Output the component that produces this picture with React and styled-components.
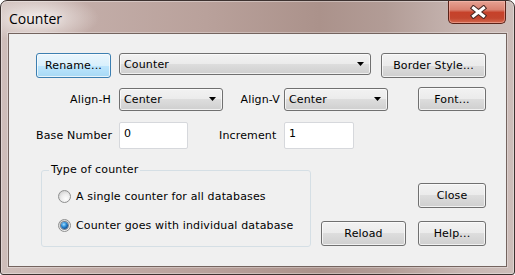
import React from "react";
import styled, { createGlobalStyle } from "styled-components";

const GlobalStyle = createGlobalStyle`
  html, body { margin: 0; padding: 0; background: #ffffff; }
  body {
    width: 515px;
    height: 275px;
    overflow: hidden;
    font-family: "DejaVu Sans", "Liberation Sans", sans-serif;
  }
`;

const Window = styled.div`
  box-sizing: border-box;
  width: 515px;
  height: 275px;
  display: flex;
  flex-direction: column;
  border: 1px solid #3d3230;
  border-radius: 7px 7px 3px 3px;
  background:
    radial-gradient(ellipse 62px 24px at 36px 17px, rgba(242, 236, 234, 0.95), rgba(242, 236, 234, 0)),
    linear-gradient(90deg, #cfbeba 0%, #c2aca7 18%, #b9a19b 40%, #ab928b 62%, #b29c96 75%, #c7b6b2 90%, #cdbdb9 100%);
  box-shadow: inset 0 0 0 1px rgba(255, 255, 255, 0.35);
  overflow: hidden;
`;

const TitleBar = styled.div`
  height: 32px;
  flex: none;
  display: flex;
  align-items: flex-start;
  justify-content: space-between;
`;

const Title = styled.div`
  padding: 8px 0 0 8px;
  font-family: "Open Sans", "Noto Sans", sans-serif;
  font-size: 14px;
  line-height: 19px;
  color: #000;
  text-shadow: 0 0 8px rgba(255, 255, 255, 0.9);
`;

const CloseBox = styled.div`
  box-sizing: border-box;
  width: 58px;
  height: 23px;
  margin-right: 8px;
  border: 1px solid #5a2218;
  border-top: none;
  border-radius: 0 0 5px 5px;
  background: linear-gradient(#e6a293 0%, #d98170 40%, #c6412a 52%, #c3452e 78%, #d4694f 100%);
  box-shadow: inset 0 0 0 1px rgba(255, 200, 190, 0.45);
  display: flex;
  align-items: center;
  justify-content: center;
  padding-left: 3px;
`;

const Client = styled.div`
  box-sizing: border-box;
  flex: 1;
  margin: 0 7px 7px 7px;
  border: 1px solid #74645f;
  box-shadow: 0 0 0 1px rgba(255, 255, 255, 0.3);
  background: #f0f0f0;
  padding: 19px 0 0 27px;
  display: flex;
  flex-direction: column;
  font-size: 11px;
  letter-spacing: 0.15px;
  color: #000;
`;

const Row = styled.div`
  display: flex;
  align-items: ${(p) => p.$align || "center"};
  margin-top: ${(p) => p.$top || 0}px;
  margin-left: ${(p) => p.$left || 0}px;
`;

const Button = styled.div`
  box-sizing: border-box;
  width: ${(p) => p.$w}px;
  height: ${(p) => p.$h || 25}px;
  margin-left: ${(p) => p.$ml || 0}px;
  border: 1px solid ${(p) => (p.$default ? "#3c7fb1" : "#707070")};
  border-radius: 3px;
  background: ${(p) =>
    p.$default
      ? "linear-gradient(#eaf6fd 0%, #d9f0fc 50%, #bee6fd 50%, #a7d9f5 100%)"
      : "linear-gradient(#f2f2f2 0%, #ebebeb 50%, #dddddd 50%, #cfcfcf 100%)"};
  box-shadow: inset 0 0 0 1px rgba(252, 252, 252, 0.75);
  display: flex;
  align-items: center;
  justify-content: center;
  color: #000;
`;

const Combo = styled.div`
  box-sizing: border-box;
  width: ${(p) => p.$w}px;
  height: ${(p) => p.$h || 23}px;
  margin-left: ${(p) => p.$ml || 0}px;
  border: 1px solid #707070;
  border-radius: 3px;
  background: linear-gradient(#f2f2f2 0%, #ebebeb 50%, #dddddd 50%, #cfcfcf 100%);
  box-shadow: inset 0 0 0 1px rgba(252, 252, 252, 0.75);
  display: flex;
  align-items: center;
  justify-content: space-between;
  padding: 0 6px 0 4px;
`;

const Label = styled.div`
  box-sizing: border-box;
  width: ${(p) => p.$w}px;
  margin-left: ${(p) => p.$ml || 0}px;
  margin-right: ${(p) => p.$mr || 0}px;
  text-align: ${(p) => p.$align || "left"};
  white-space: nowrap;
`;

const TextBox = styled.div`
  box-sizing: border-box;
  width: ${(p) => p.$w}px;
  height: 27px;
  border: 1px solid #d6d8dc;
  border-radius: 2px;
  background: #ffffff;
  padding: 4px 0 0 4px;
  line-height: 13px;
`;

const Group = styled.fieldset`
  box-sizing: border-box;
  width: 270px;
  margin: 0;
  padding: 5px 0 6px 0;
  border: 1px solid #d5dfe5;
  border-radius: 3px;
  display: flex;
  flex-direction: column;
`;

const Legend = styled.legend`
  margin-left: 7px;
  padding: 0 2px;
  line-height: 14px;
  font-size: 11px;
`;

const RadioRow = styled.label`
  height: 29px;
  display: flex;
  align-items: center;
  gap: 5px;
  padding-left: 16px;
  white-space: nowrap;
`;

const RadioDot = styled.span`
  box-sizing: border-box;
  width: 13px;
  height: 13px;
  border-radius: 50%;
  border: 1px solid #8e8f8f;
  background: radial-gradient(circle at 62% 70%, #fdfdfd 0%, #ececec 45%, #c4c4c4 100%);
  display: flex;
  align-items: center;
  justify-content: center;
  &::after {
    content: "";
    display: ${(p) => (p.$checked ? "block" : "none")};
    width: 7px;
    height: 7px;
    border-radius: 50%;
    background: radial-gradient(circle at 40% 35%, #a6e0ff 0%, #2f8ed8 38%, #0f4a8a 75%, #0a2646 100%);
    box-shadow: 0 0 0 1px rgba(30, 45, 70, 0.55);
  }
`;

const ButtonGrid = styled.div`
  display: grid;
  grid-template-columns: 85px 68px;
  grid-template-rows: 25px 25px;
  column-gap: 12px;
  row-gap: 13px;
  margin-left: 10px;
  margin-top: 20px;
`;

const Cell = styled.div`
  grid-column: ${(p) => p.$col};
  grid-row: ${(p) => p.$row};
`;

const Arrow = () => (
  <svg width="7" height="4" viewBox="0 0 7 4">
    <polygon points="0,0 7,0 3.5,4" fill="#000" />
  </svg>
);

const CloseGlyph = () => (
  <svg width="17" height="14" viewBox="0 0 17 14">
    <path d="M3.5 3 L13.5 11 M13.5 3 L3.5 11" stroke="#4a2a25" strokeWidth="5" strokeLinecap="square" />
    <path d="M3.5 3 L13.5 11 M13.5 3 L3.5 11" stroke="#ffffff" strokeWidth="3" strokeLinecap="square" />
  </svg>
);

export default function App() {
  return (
    <>
      <GlobalStyle />
      <Window>
        <TitleBar>
          <Title>Counter</Title>
          <CloseBox>
            <CloseGlyph />
          </CloseBox>
        </TitleBar>
        <Client>
          <Row $align="flex-start">
            <Button $w={75} $default>Rename...</Button>
            <Combo $w={252} $h={22} $ml={8}>
              <span>Counter</span>
              <Arrow />
            </Combo>
            <Button $w={105} $ml={10}>Border Style...</Button>
          </Row>

          <Row $top={9}>
            <Label $w={75} $align="right" $mr={8}>Align-H</Label>
            <Combo $w={104}>
              <span>Center</span>
              <Arrow />
            </Combo>
            <Label $w={57} $align="right" $mr={4}>Align-V</Label>
            <Combo $w={104}>
              <span>Center</span>
              <Arrow />
            </Combo>
            <Button $w={68} $h={24} $ml={30}>Font...</Button>
          </Row>

          <Row $top={11}>
            <Label $w={75} $mr={8}>Base Number</Label>
            <TextBox $w={69}>0</TextBox>
            <Label $w={57} $ml={31} $mr={8}>Increment</Label>
            <TextBox $w={70}>1</TextBox>
          </Row>

          <Row $top={14} $left={5} $align="flex-start">
            <Group>
              <Legend>Type of counter</Legend>
              <RadioRow>
                <RadioDot />
                A single counter for all databases
              </RadioRow>
              <RadioRow>
                <RadioDot $checked />
                Counter goes with individual database
              </RadioRow>
            </Group>
            <ButtonGrid>
              <Cell $col={2} $row={1}>
                <Button $w={68}>Close</Button>
              </Cell>
              <Cell $col={1} $row={2}>
                <Button $w={85}>Reload</Button>
              </Cell>
              <Cell $col={2} $row={2}>
                <Button $w={68}>Help...</Button>
              </Cell>
            </ButtonGrid>
          </Row>
        </Client>
      </Window>
    </>
  );
}
